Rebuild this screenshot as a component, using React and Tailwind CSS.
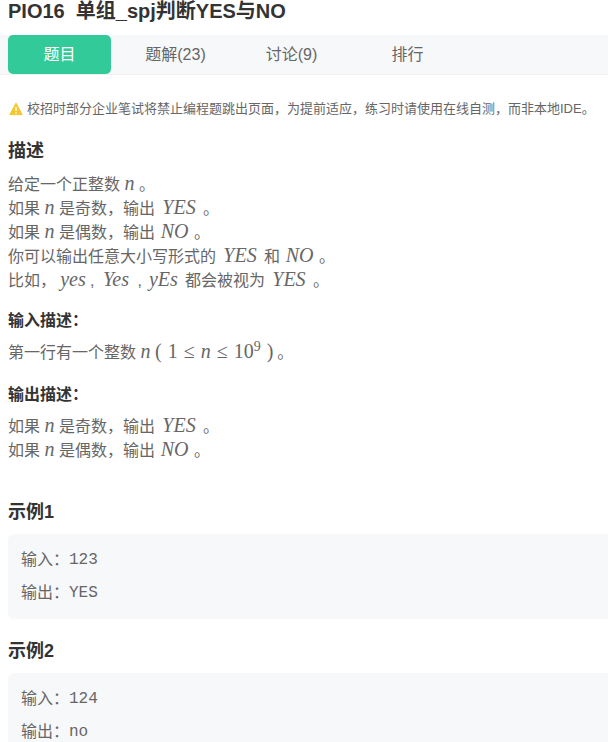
import { clsx } from "clsx";

const mathFont = "font-['Liberation_Serif',serif] text-[20px] leading-none";

function Var({ children, width = "w-[19px]" }) {
  return (
    <i className={clsx("inline-block text-center", mathFont, width)}>{children}</i>
  );
}

const Yes = () => <Var width="w-[48px]">YES</Var>;
const No = () => <Var width="w-[39px]">NO</Var>;

function ParityRules() {
  return (
    <>
      <p>如果<Var>n</Var>是奇数，输出<Yes />。</p>
      <p>如果<Var>n</Var>是偶数，输出<No />。</p>
    </>
  );
}

function Example({ index, input, output }) {
  return (
    <section>
      <h2 className="text-lg leading-6 font-bold text-[#333]">示例{index}</h2>
      <dl className="mt-[10px] flex flex-col gap-[9px] rounded-l-md bg-[#f7f8fa] p-[14px] pl-[13px]">
        {[["输入：", input], ["输出：", output]].map(([label, value]) => (
          <div key={label} className="flex leading-6">
            <dt>{label}</dt>
            <dd className="font-['Liberation_Mono',monospace]">{value}</dd>
          </div>
        ))}
      </dl>
    </section>
  );
}

const tabs = ["题目", "题解(23)", "讨论(9)", "排行"];

export default function App() {
  return (
    <main className="overflow-hidden bg-white font-['Liberation_Sans','Noto_Sans_CJK_SC',sans-serif] text-base text-[#666]">
      <h1 className="pl-2 text-xl leading-[22px] font-bold whitespace-pre text-[#333]">PIO16  单组_spj判断YES与NO</h1>

      <nav className="mt-[13px] flex gap-[13px] border-b border-[#f0f1f3] bg-[#f7f8fa] pl-2">
        {tabs.map((tab, i) => (
          <button
            key={tab}
            type="button"
            className={clsx("h-[39px] w-[103px] shrink-0 rounded-[5px] leading-6", i === 0 && "bg-[#32ca99] text-white")}
          >
            {tab}
          </button>
        ))}
      </nav>

      <p className="mt-6 flex items-center gap-1 pl-[9px] text-[13px] leading-5 whitespace-nowrap">
        <svg className="size-[14px] shrink-0" viewBox="0 0 14 14" aria-hidden="true">
          <path d="M7 1.2 13.2 12.6H.8Z" fill="#f3c82f" stroke="#f3c82f" strokeWidth="1" strokeLinejoin="round" />
          <path d="M7 5v4M7 10.2v1.3" stroke="#fff" strokeWidth="1.3" />
        </svg>
        校招时部分企业笔试将禁止编程题跳出页面，为提前适应，练习时请使用在线自测，而非本地IDE。
      </p>

      <article className="pl-2 leading-6">
        <h2 className="mt-5 text-lg leading-6 font-bold text-[#333]">描述</h2>
        <div className="mt-[10px]">
          <p>给定一个正整数<Var>n</Var>。</p>
          <ParityRules />
          <p>你可以输出任意大小写形式的<Yes />和<No />。</p>
          <p>
            比如，<Var width="w-[34px]">yes</Var>,<Var width="w-[43px]">Yes</Var>,<Var width="w-[43px]">yEs</Var>都会被视为<Yes />。
          </p>
        </div>

        <h3 className="mt-4 font-bold text-[#333]">输入描述：</h3>
        <p className="mt-2 flex items-baseline">
          第一行有一个整数
          <Var>n</Var>
          <span className={clsx("flex gap-[6px]", mathFont)}>
            <span>(</span>
            <span>1</span>
            <span>≤</span>
            <i>n</i>
            <span>≤</span>
            <span>10<sup className="text-[14px]">9</sup></span>
            <span>)</span>
          </span>
          <span className="ml-1">。</span>
        </p>

        <h3 className="mt-[18px] font-bold text-[#333]">输出描述：</h3>
        <div className="mt-2">
          <ParityRules />
        </div>

        <div className="mt-[37px] flex flex-col gap-5">
          <Example index={1} input="123" output="YES" />
          <Example index={2} input="124" output="no" />
        </div>
      </article>
    </main>
  );
}
